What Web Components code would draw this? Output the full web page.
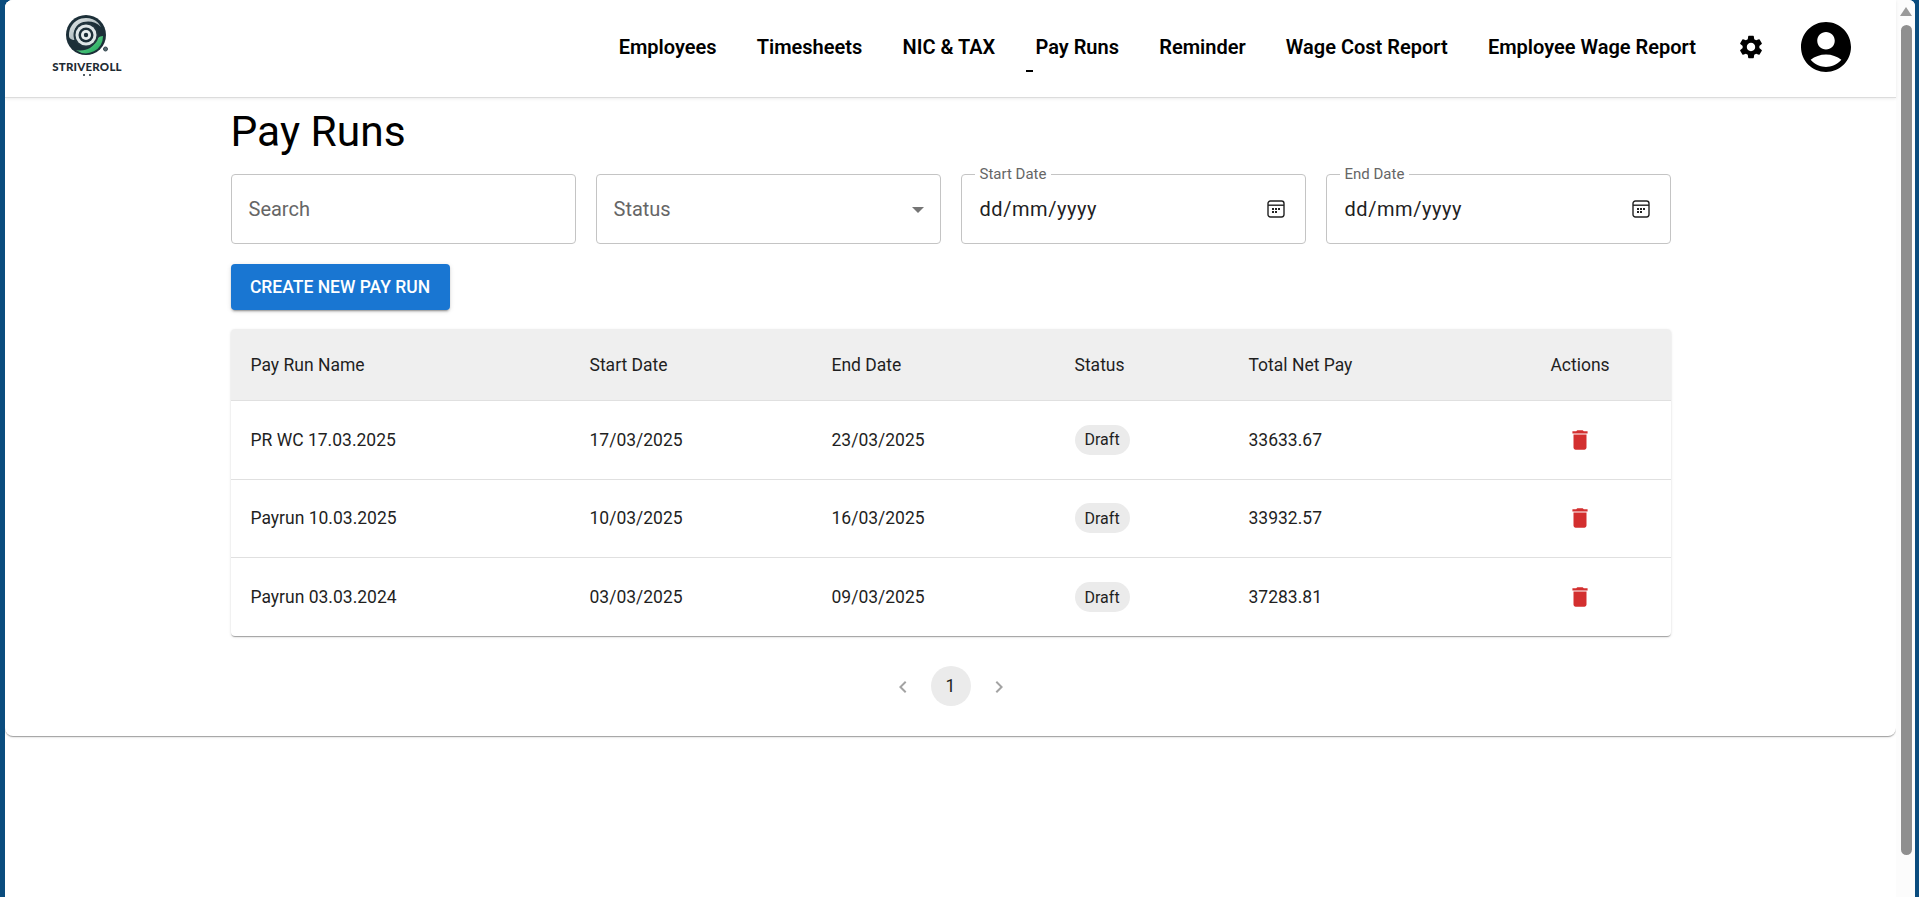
<!DOCTYPE html>
<html lang="en">
<head>
<meta charset="utf-8">
<title>Pay Runs</title>
<style>
  html, body { margin: 0; height: 100%; overflow: hidden; }
  body { background: #0a4c7e; font-family: Roboto, "Liberation Sans", sans-serif; color: #000; }
</style>
</head>
<body>

<app-window>
  <top-nav></top-nav>
  <page-body title-text="Pay Runs">
    <div slot="filters">
      <filter-field placeholder="Search"></filter-field>
      <filter-field placeholder="Status" kind="select"></filter-field>
      <filter-field label="Start Date" value="dd/mm/yyyy" kind="date"></filter-field>
      <filter-field label="End Date" value="dd/mm/yyyy" kind="date"></filter-field>
    </div>
    <raised-button slot="action">Create new pay run</raised-button>
    <pay-table slot="table">
      <pay-row name="PR WC 17.03.2025" start="17/03/2025" end="23/03/2025" status="Draft" net="33633.67"></pay-row>
      <pay-row name="Payrun 10.03.2025" start="10/03/2025" end="16/03/2025" status="Draft" net="33932.57"></pay-row>
      <pay-row name="Payrun 03.03.2024" start="03/03/2025" end="09/03/2025" status="Draft" net="37283.81" last></pay-row>
    </pay-table>
    <page-pager slot="pager"></page-pager>
  </page-body>
</app-window>

<script>
const ICONS = {
  gear: 'M19.14 12.94c.04-.3.06-.61.06-.94 0-.32-.02-.64-.07-.94l2.03-1.58c.18-.14.23-.41.12-.61l-1.92-3.32c-.12-.22-.37-.29-.59-.22l-2.39.96c-.5-.38-1.03-.7-1.62-.94l-.36-2.54c-.04-.24-.24-.41-.48-.41h-3.84c-.24 0-.43.17-.47.41l-.36 2.54c-.59.24-1.13.57-1.62.94l-2.39-.96c-.22-.08-.47 0-.59.22L2.74 8.87c-.12.21-.08.47.12.61l2.03 1.58c-.05.3-.09.63-.09.94s.02.64.07.94l-2.03 1.58c-.18.14-.23.41-.12.61l1.92 3.32c.12.22.37.29.59.22l2.39-.96c.5.38 1.03.7 1.62.94l.36 2.54c.05.24.24.41.48.41h3.84c.24 0 .44-.17.47-.41l.36-2.54c.59-.24 1.13-.56 1.62-.94l2.39.96c.22.08.47 0 .59-.22l1.92-3.32c.12-.22.07-.47-.12-.61l-2.01-1.58zM12 15.6c-1.98 0-3.6-1.62-3.6-3.6s1.62-3.6 3.6-3.6 3.6 1.62 3.6 3.6-1.62 3.6-3.6 3.6z',
  account: 'M12 2C6.48 2 2 6.48 2 12s4.48 10 10 10 10-4.48 10-10S17.52 2 12 2zm0 4c1.93 0 3.5 1.57 3.5 3.5S13.93 13 12 13s-3.5-1.57-3.5-3.5S10.07 6 12 6zm0 14c-2.03 0-4.43-.82-6.14-2.88C7.55 15.8 9.68 15 12 15s4.45.8 6.14 2.12C16.43 19.18 14.03 20 12 20z',
  trash: 'M6 19c0 1.1.9 2 2 2h8c1.1 0 2-.9 2-2V7H6v12zM19 4h-3.5l-1-1h-5l-1 1H5v2h14V4z',
  left: 'M15.41 7.41 14 6l-6 6 6 6 1.41-1.41L10.83 12z',
  right: 'M10 6 8.59 7.41 13.17 12l-4.58 4.59L10 18l6-6z'
};

const icon = (name, size, color) =>
  `<svg width="${size}" height="${size}" viewBox="0 0 24 24" fill="${color}" style="display:block"><path d="${ICONS[name]}"/></svg>`;

class AppWindow extends HTMLElement {
  constructor() {
    super();
    this.attachShadow({ mode: 'open' }).innerHTML = `
      <style>
        :host { display: flex; height: 897px; margin: 0 4px 0 5px; background: #fff; border-top-left-radius: 8px; border-top-right-radius: 6px; overflow: hidden; }
        .content { flex: 1; min-width: 0; background: #fff; }
        .bar { width: 19px; flex: none; background: #fcfcfc; display: flex; flex-direction: column; align-items: center; }
        .up { width: 0; height: 0; margin: 7px 0 9px 1px; border-left: 6px solid transparent; border-right: 6px solid transparent; border-bottom: 9px solid #9a9a9a; }
        .thumb { width: 11px; height: 830px; background: #8f8f8f; border-radius: 6px; margin-left: 1px; }
      </style>
      <div class="content"><slot></slot></div>
      <div class="bar"><div class="up"></div><div class="thumb"></div></div>`;
  }
}
customElements.define('app-window', AppWindow);

class BrandLogo extends HTMLElement {
  constructor() {
    super();
    this.attachShadow({ mode: 'open' }).innerHTML = `
      <style>
        :host { display: flex; flex-direction: column; align-items: center; width: 68px; color: #1e2b33; font-family: Lato, Roboto, sans-serif; }
        svg { display: block; }
        .name { font-size: 11.5px; font-weight: 900; letter-spacing: .2px; line-height: 12px; margin-top: 5px; white-space: nowrap; }
        .dots { display: flex; gap: 4px; margin-top: 1px; }
        .dots i { width: 2px; height: 2px; background: #1e2b33; border-radius: 50%; }
      </style>
      <svg width="48" height="42" viewBox="0 0 48 42">
        <defs>
          <linearGradient id="g" x1="0" y1="0" x2="1" y2="1"><stop offset="0" stop-color="#e6ecec"/><stop offset="1" stop-color="#8a9a9f"/></linearGradient>
          <linearGradient id="gr" x1="0" y1="0" x2="1" y2="1"><stop offset="0" stop-color="#7ddc9a"/><stop offset="1" stop-color="#17a557"/></linearGradient>
        </defs>
        <circle cx="23" cy="21" r="20" fill="#1c2f38"/>
        <path d="M6 22A17 17 0 0 1 38 13C32 7 23 6 16 10 11 14 10 20 12 26 8 26 6 24 6 22z" fill="url(#g)"/>
        <path d="M40 22A17 17 0 0 1 13 36C22 38 30 34 33 27 34 25 36 22 40 22z" fill="url(#gr)"/>
        <circle cx="23" cy="21" r="12.5" fill="#22353e"/>
        <circle cx="23" cy="21" r="10.5" fill="#dfe6e7"/>
        <circle cx="23" cy="21" r="7.5" fill="#1c2f38"/>
        <circle cx="23" cy="21" r="5" fill="#e8eeee"/>
        <circle cx="23" cy="21" r="2.2" fill="#1c2f38"/>
        <circle cx="42.5" cy="35" r="2" fill="#5a6b72" stroke="#33474f" stroke-width="1"/>
      </svg>
      <div class="name">STRIVEROLL</div>
      <div class="dots"><i></i><i></i></div>`;
  }
}
customElements.define('brand-logo', BrandLogo);

class TopNav extends HTMLElement {
  constructor() {
    super();
    const items = ['Employees', 'Timesheets', 'NIC & TAX', 'Pay Runs', 'Reminder', 'Wage Cost Report', 'Employee Wage Report'];
    const links = items.map(t => `<a class="${t === 'Pay Runs' ? 'active' : ''}">${t}</a>`).join('');
    this.attachShadow({ mode: 'open' }).innerHTML = `
      <style>
        :host { display: flex; align-items: center; height: 94px; padding: 0 40px 3px 48px; border-bottom: 1px solid #dcdcdc; box-shadow: 0 1px 3px rgba(0,0,0,.08); background: #fff; position: relative; }
        brand-logo { align-self: flex-start; margin-top: 14px; }
        nav { margin-left: auto; display: flex; align-items: center; gap: 40.2px; font-size: 20px; font-weight: 600; color: #000; }
        a { position: relative; white-space: nowrap; }
        a.active::after { content: ""; position: absolute; left: -9px; top: 35px; width: 7px; height: 2px; background: #000; }
        .gear { margin-left: 41px; margin-right: 31px; }
      </style>
      <brand-logo></brand-logo>
      <nav>${links}</nav>
      <div class="gear">${icon('gear', 28, '#000')}</div>
      <div>${icon('account', 60, '#000')}</div>`;
  }
}
customElements.define('top-nav', TopNav);

class PageBody extends HTMLElement {
  constructor() {
    super();
    this.attachShadow({ mode: 'open' }).innerHTML = `
      <style>
        :host { display: block; height: 638px; background: #fff; border-radius: 0 0 8px 8px; box-shadow: 0 2px 1px -1px rgba(0,0,0,.2), 0 1px 1px rgba(0,0,0,.14), 0 1px 3px rgba(0,0,0,.12); }
        .wrap { width: 1440px; margin: 0 auto; }
        h1 { margin: 0; height: 76px; box-sizing: border-box; padding-top: 6px; font-size: 42.5px; line-height: 56px; font-weight: 400; color: #000; }
        ::slotted([slot=filters]) { display: grid; grid-template-columns: repeat(4, 1fr); gap: 20px; }
        .action { margin-top: 20px; display: flex; }
        .table { margin-top: 19px; }
        .pager { margin-top: 30px; }
      </style>
      <div class="wrap">
        <h1>${this.getAttribute('title-text')}</h1>
        <slot name="filters"></slot>
        <div class="action"><slot name="action"></slot></div>
        <div class="table"><slot name="table"></slot></div>
        <div class="pager"><slot name="pager"></slot></div>
      </div>`;
  }
}
customElements.define('page-body', PageBody);

class FilterField extends HTMLElement {
  constructor() {
    super();
    const kind = this.getAttribute('kind');
    const label = this.getAttribute('label');
    const placeholder = this.getAttribute('placeholder');
    const value = this.getAttribute('value');
    let trail = '';
    if (kind === 'select') trail = '<span class="caret"></span>';
    if (kind === 'date') trail = `<svg class="cal" width="18" height="18" viewBox="0 0 18 18" fill="none" stroke="#222" stroke-width="1.4"><rect x="1" y="1" width="16" height="16" rx="2.4"/><path d="M1 5.2h16"/><g fill="#222" stroke="none"><rect x="5" y="8" width="2" height="2"/><rect x="8" y="8" width="2" height="2"/><rect x="11" y="8" width="2" height="2"/><rect x="5" y="11" width="2" height="2"/><rect x="8" y="11" width="2" height="2"/></g></svg>`;
    this.attachShadow({ mode: 'open' }).innerHTML = `
      <style>
        :host { display: flex; align-items: center; position: relative; height: 70px; box-sizing: border-box; padding: 0 17px; border: 1px solid #c4c4c4; border-radius: 4px; background: #fff; font-size: 20px; }
        .ph { color: #666; margin-top: -1px; }
        .val { color: #1f1f1f; letter-spacing: .55px; margin-left: 1px; }
        label { position: absolute; left: 13px; top: -9px; padding: 0 5px; font-size: 15px; line-height: 16px; color: #666; background: #fff; }
        .caret { margin-left: auto; margin-right: -1px; margin-top: 2px; width: 0; height: 0; border-left: 6px solid transparent; border-right: 6px solid transparent; border-top: 6px solid #757575; }
        .cal { margin-left: auto; margin-right: 3px; display: block; }
      </style>
      ${label ? `<label>${label}</label>` : ''}
      ${placeholder ? `<span class="ph">${placeholder}</span>` : ''}
      ${value ? `<span class="val">${value}</span>` : ''}
      ${trail}`;
  }
}
customElements.define('filter-field', FilterField);

class RaisedButton extends HTMLElement {
  constructor() {
    super();
    this.attachShadow({ mode: 'open' }).innerHTML = `
      <style>
        :host { display: inline-flex; align-items: center; justify-content: center; width: 219px; height: 46px; background: #1976d2; color: #fff; border-radius: 4px; font-size: 17.5px; font-weight: 500; text-transform: uppercase; box-shadow: 0 3px 1px -2px rgba(0,0,0,.2), 0 2px 2px rgba(0,0,0,.14), 0 1px 5px rgba(0,0,0,.12); }
      </style>
      <slot></slot>`;
  }
}
customElements.define('raised-button', RaisedButton);

const COLUMNS = '339px 242px 243px 174px 261px 181px';

class PayTable extends HTMLElement {
  constructor() {
    super();
    this.attachShadow({ mode: 'open' }).innerHTML = `
      <style>
        :host { display: block; background: #fff; border-radius: 4px; overflow: hidden; box-shadow: 0 2px 1px -1px rgba(0,0,0,.2), 0 1px 1px rgba(0,0,0,.14), 0 1px 3px rgba(0,0,0,.12); font-size: 17.5px; color: #1f1f1f; }
        .head { display: grid; grid-template-columns: ${COLUMNS}; align-items: center; height: 72px; box-sizing: border-box; background: #efefef; border-bottom: 1px solid #e0e0e0; }
        .head span { padding-left: 20px; }
        .head span:last-child { padding-left: 0; text-align: center; }
      </style>
      <div class="head"><span>Pay Run Name</span><span>Start Date</span><span>End Date</span><span>Status</span><span>Total Net Pay</span><span>Actions</span></div>
      <slot></slot>`;
  }
}
customElements.define('pay-table', PayTable);

class PayRow extends HTMLElement {
  constructor() {
    super();
    const a = n => this.getAttribute(n);
    this.attachShadow({ mode: 'open' }).innerHTML = `
      <style>
        :host { display: grid; grid-template-columns: ${COLUMNS}; align-items: center; height: 78.5px; box-sizing: border-box; border-bottom: 1px solid #e0e0e0; }
        :host([last]) { border-bottom: none; height: 78px; }
        .cell { padding-left: 20px; }
        .chip { display: inline-flex; align-items: center; height: 30px; padding: 0 10px; border-radius: 15px; background: #ebebeb; font-size: 16px; }
        .del { display: flex; justify-content: center; }
      </style>
      <div class="cell">${a('name')}</div>
      <div class="cell">${a('start')}</div>
      <div class="cell">${a('end')}</div>
      <div class="cell"><span class="chip">${a('status')}</span></div>
      <div class="cell">${a('net')}</div>
      <div class="del">${icon('trash', 26, '#d32f2f')}</div>`;
  }
}
customElements.define('pay-row', PayRow);

class PagePager extends HTMLElement {
  constructor() {
    super();
    this.attachShadow({ mode: 'open' }).innerHTML = `
      <style>
        :host { display: flex; justify-content: center; gap: 8px; }
        .btn { width: 40px; height: 40px; display: flex; align-items: center; justify-content: center; border-radius: 50%; font-size: 17.5px; color: #1f1f1f; }
        .btn svg { margin-top: 1px; }
        .on { background: #ebebeb; }
      </style>
      <div class="btn">${icon('left', 24, '#a3a3a3')}</div>
      <div class="btn on">1</div>
      <div class="btn">${icon('right', 24, '#a3a3a3')}</div>`;
  }
}
customElements.define('page-pager', PagePager);
</script>
</body>
</html>
